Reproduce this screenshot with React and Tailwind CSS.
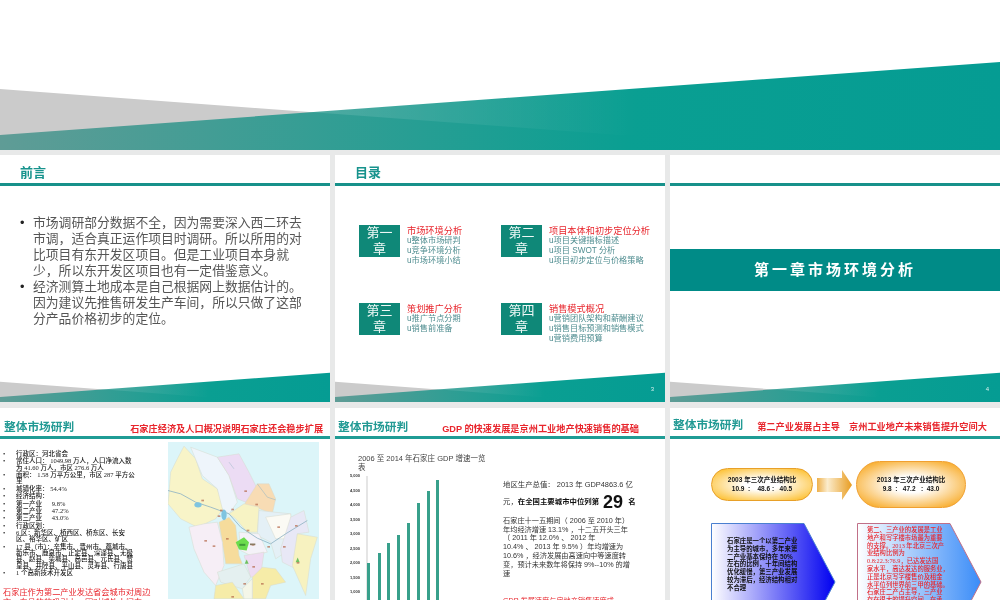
const bars = [
  { x: 367, top: 562 },
  { x: 378, top: 552 },
  { x: 387, top: 542 },
  { x: 397, top: 534 },
  { x: 407, top: 522 },
  { x: 417, top: 502 },
  { x: 427, top: 490 },
  { x: 436, top: 479 },
];

const ticks = ["5,000", "4,500", "4,000", "3,500", "3,000", "2,500", "2,000", "1,500", "1,000"];

const regions = [
  ["#f8f4c8", "30,100 50,60 70,22 105,60 125,120 170,150 190,205 165,240 110,265 60,240 22,195 26,150"],
  ["#eef5fb", "90,25 130,40 170,55 205,110 230,190 205,225 185,210 170,150 125,110"],
  ["#ecdcf4", "170,55 235,45 265,100 290,150 255,190 230,180 205,110"],
  ["#f8dcb4", "290,135 325,135 345,180 335,225 285,205 250,200 255,190"],
  ["#f7f3c4", "205,225 250,195 295,205 290,280 260,280 225,240"],
  ["#f6dc9c", "175,250 205,235 225,260 235,350 245,375 195,375 185,310"],
  ["#f6eef6", "85,265 130,255 170,250 185,310 190,380 165,440 130,400 100,330"],
  ["#e4f0f6", "295,215 390,225 390,330 345,360 330,310 290,290"],
  ["#fbfaf4", "315,235 390,225 395,300 345,300"],
  ["#e8e8f6", "390,235 430,215 445,280 410,285 405,390 365,370 360,330"],
  ["#f7f2c0", "410,285 470,295 450,360 435,470 395,380"],
  ["#f4f2f8", "235,280 295,285 320,340 270,350 240,335"],
  ["#eedcf2", "250,350 310,340 300,410 270,415"],
  ["#e4f0f0", "170,400 250,375 270,415 245,450 180,430"],
  ["#f6eca8", "275,415 305,385 345,390 375,430 330,440 315,480 275,480"],
  ["#f6eca8", "165,440 215,430 250,480 160,480"],
  ["#f4f6e8", "245,450 275,420 275,480 250,480"],
];

const pins = [
  [255, 157], [288, 197], [216, 212], [175, 232], [126, 185], [182, 215], [262, 275],
  [200, 300], [135, 306], [160, 322], [277, 318], [324, 324], [371, 324], [354, 265],
  [407, 261], [412, 372], [279, 384], [252, 435], [305, 435], [216, 474],
];

function Wedge() {
  return (
    <svg viewBox="0 0 1000 150" preserveAspectRatio="none" className="block h-full w-full">
      <defs>
        <linearGradient id="tealFade" x1="0" x2="1" y1="0" y2="0">
          <stop offset="0" stopColor="#5f9c96" />
          <stop offset="0.63" stopColor="#0a9f92" />
          <stop offset="1" stopColor="#059c93" />
        </linearGradient>
        <linearGradient id="tealGlow" gradientUnits="userSpaceOnUse" x1="310" x2="640" y1="0" y2="0">
          <stop offset="0" stopColor="#ffffff" stopOpacity="0.13" />
          <stop offset="1" stopColor="#ffffff" stopOpacity="0" />
        </linearGradient>
      </defs>
      <polygon points="0,89 620,135 620,150 0,150" fill="#cbcbcb" />
      <polygon points="0,135 1000,62 1000,150 0,150" fill="url(#tealFade)" />
      <polygon points="310,112 640,88 640,135 620,135" fill="url(#tealGlow)" />
    </svg>
  );
}

function Slide({ title, page, plain, children }) {
  return (
    <div className="relative flex h-full flex-col overflow-hidden bg-white">
      <div className="flex h-[28px] items-end pb-[2px] pl-[20px] text-[13px] font-bold leading-[16px] text-[#17938d]">
        {title}
      </div>
      <div className="h-[3px] bg-[#17918a]" />
      <div className="min-h-0 flex-1">{children}</div>
      {!plain && (
        <div className="h-[50px] shrink-0">
          <Wedge />
        </div>
      )}
      {page && <span className="absolute bottom-[9px] right-[11px] text-[6px] leading-[8px] text-[#d8f0ee]">{page}</span>}
    </div>
  );
}

function TocItem({ chapter, heading, lines }) {
  return (
    <div className="flex items-start gap-[7px]">
      <div className="flex h-[32px] w-[41px] shrink-0 items-center justify-center bg-[#0f8878] text-center text-[13px] leading-[16px] text-[#eef8f6]">
        <span>
          第{chapter}
          <br />章
        </span>
      </div>
      <div className="pt-[1px] text-[8.2px] leading-[10px] text-[#4f8d90]">
        <p className="text-[9.2px] text-[#e8262d]">{heading}</p>
        {lines.map((line) => (
          <p key={line}>u{line}</p>
        ))}
      </div>
    </div>
  );
}

function MarketSlide({ heading, headingClass, titleClass, children, indent }) {
  return (
    <div className="flex h-full flex-col overflow-hidden bg-white">
      <div className={"flex h-[28px] shrink-0 items-end whitespace-nowrap pr-[8px] " + indent}>
        <span className={"text-[11.7px] font-bold leading-[16px] text-[#229a94] " + titleClass}>整体市场研判</span>
        <span className={"text-[9.2px] font-bold leading-[12px] text-[#e8262d] " + headingClass}>{heading}</span>
      </div>
      <div className="h-[3px] shrink-0 bg-[#1f9c95]" />
      <div className="relative min-h-0 flex-1">{children}</div>
    </div>
  );
}

function CityFacts() {
  const facts = [
    ["行政区：河北省会"],
    ["常住人口： 1049.98 万人，人口净流入数", "为 41.60 万人，市区 276.6 万人"],
    ["面积： 1.58 万平方公里，市区 287 平方公", "里"],
    ["城镇化率： 54.4%"],
    ["经济结构："],
    ["第一产业      9.8%"],
    ["第二产业      47.2%"],
    ["第三产业      43.0%"],
    ["行政区划："],
    ["6 区：新华区、桥西区、桥东区、长安", "区、裕华区、矿区"],
    ["17 县（市）：辛集市、晋州市、藁城市、", "新乐市、鹿泉市、正定县、深泽县、无极", "县、赵县、栾城县、高邑县、元氏县、赞", "皇县、井陉县、平山县、灵寿县、行唐县"],
    ["1 个高新技术开发区"],
  ];
  return (
    <ul className="flex w-[140px] flex-col gap-[1.1px] pl-[3px] font-['Liberation_Serif','Noto_Sans_CJK_SC',serif] text-[6.5px] font-medium leading-[6.3px] text-[#222]">
      {facts.map((lines) => (
        <li key={lines[0]} className="flex">
          <span className="w-[13px] shrink-0">•</span>
          <span className="whitespace-pre">
            {lines.map((line) => (
              <span key={line} className="block">{line}</span>
            ))}
          </span>
        </li>
      ))}
    </ul>
  );
}

function CityMap() {
  return (
    <svg viewBox="22 10 453 470" className="block h-[157px] w-[151px] bg-[#dcf5f9]">
      {regions.map(([fill, points]) => (
        <polygon key={points} points={points} fill={fill} stroke="#d6dbcf" strokeWidth="1.5" />
      ))}
      <path d="M22 155 L60 165 L105 190 L150 205 L205 225 L240 265 L290 298 L330 315 L375 285 L440 245" fill="none" stroke="#8fb3c4" strokeWidth="2.5" />
      <path d="M290 135 L320 175 L345 183" fill="none" stroke="#8fb3c4" strokeWidth="1.5" />
      <path d="M205 70 L220 90" fill="none" stroke="#9fb8c8" strokeWidth="1.5" />
      <ellipse cx="112" cy="198" rx="11" ry="8" fill="#7fc4e0" />
      <ellipse cx="190" cy="228" rx="8" ry="16" fill="#7fc4e0" />
      <polygon points="225,310 250,295 265,310 258,335 235,332" fill="#6bdc4c" />
      <polygon points="258,362 264,375 252,375" fill="#6fc060" />
      <polygon points="411,356 417,370 405,370" fill="#6fc060" />
      {pins.map(([x, y]) => (
        <rect key={x + "-" + y} x={x - 4} y={y - 2.5} width="8" height="5" fill="#b5684c" opacity="0.7" />
      ))}
      <rect x="236" y="315" width="18" height="6" fill="#3f9a38" />
      <rect x="268" y="314" width="16" height="5" fill="#8a7a60" />
    </svg>
  );
}

function GdpChart() {
  return (
    <svg viewBox="335 470 120 130" className="block h-[130px] w-[120px]">
      {ticks.map((label, i) => (
        <text key={label} x="355" y={476 + i * 14.5} fontSize="4" fontWeight="700" fill="#333" textAnchor="middle">{label}</text>
      ))}
      <line x1="367" x2="367" y1="475" y2="600" stroke="#aaa" strokeWidth="0.6" />
      {bars.map((bar) => (
        <rect key={bar.x} x={bar.x} y={bar.top} width="3" height={600 - bar.top} fill="#38a08b" />
      ))}
    </svg>
  );
}

function Pill({ className, children }) {
  return (
    <div
      className={
        "flex shrink-0 flex-col items-center justify-center rounded-full border text-center text-[6.5px] font-bold leading-[8.5px] text-[#111] " +
        className
      }
    >
      {children}
    </div>
  );
}

function Pentagon({ fill, stroke, children }) {
  return (
    <div className="relative h-[118px] w-[125px] shrink-0">
      <svg viewBox="0 0 125 118" className="absolute inset-0 block h-full w-full">
        <defs>
          <linearGradient id={fill} x1="0" x2="1" y1="0" y2="0">
            <stop offset="0" stopColor="#ffffff" />
            <stop offset="1" stopColor={fill} />
          </linearGradient>
        </defs>
        <polygon points="0.5,0.5 93,0.5 124,59 93,117.5 0.5,117.5" fill={"url(#" + fill + ")"} stroke={stroke} />
      </svg>
      {children}
    </div>
  );
}

export default function App() {
  return (
    <div className="flex h-[600px] w-[1000px] flex-col overflow-hidden bg-[#e8e9e9] blur-[0.5px] [font-family:'Liberation_Sans','Noto_Sans_CJK_SC',sans-serif]">
      <div className="h-[150px] shrink-0 bg-white">
        <Wedge />
      </div>

      <div className="mt-[5px] grid h-[247px] shrink-0 grid-cols-3 gap-x-[5px]">
        <Slide title="前言">
          <ul className="flex flex-col gap-[0.2px] pl-[20px] pt-[29px] text-[12.8px] leading-[16px] text-[#555]">
            <li className="flex">
              <span className="w-[13px] shrink-0 text-[#222]">•</span>
              <span className="whitespace-nowrap">
                市场调研部分数据不全，因为需要深入西二环去
                <br />市调，适合真正运作项目时调研。所以所用的对
                <br />比项目有东开发区项目。但是工业项目本身就
                <br />少，所以东开发区项目也有一定借鉴意义。
              </span>
            </li>
            <li className="flex">
              <span className="w-[13px] shrink-0 text-[#222]">•</span>
              <span className="whitespace-nowrap">
                经济测算土地成本是自己根据网上数据估计的。
                <br />因为建议先推售研发生产车间，所以只做了这部
                <br />分产品价格初步的定位。
              </span>
            </li>
          </ul>
        </Slide>

        <Slide title="目录" page="3">
          <div className="grid grid-cols-[142px_1fr] grid-rows-[78px_auto] pl-[24px] pt-[39px]">
            <TocItem chapter="一" heading="市场环境分析" lines={["整体市场研判", "竞争环境分析", "市场环境小结"]} />
            <TocItem chapter="二" heading="项目本体和初步定位分析" lines={["项目关键指标描述", "项目 SWOT 分析", "项目初步定位与价格策略"]} />
            <TocItem chapter="三" heading="策划推广分析" lines={["推广节点分期", "销售前准备"]} />
            <TocItem chapter="四" heading="销售模式概况" lines={["营销团队架构和薪酬建议", "销售目标预测和销售模式", "营销费用预算"]} />
          </div>
        </Slide>

        <Slide page="4">
          <div className="mt-[63px] flex h-[42px] items-center justify-center bg-[#008b87] text-[15px] font-bold tracking-[3px] text-white">
            第一章市场环境分析
          </div>
        </Slide>
      </div>

      <div className="mt-[6px] grid h-[192px] shrink-0 grid-cols-3 gap-x-[5px]">
        <MarketSlide indent="pl-[4px]" titleClass="mb-[1px]" headingClass="ml-[56px] mb-[1px]" heading="石家庄经济及人口概况说明石家庄还会稳步扩展">
          <div className="flex h-full items-start pt-[12px]">
            <div className="w-[168px] shrink-0">
              <CityFacts />
              <p className="mt-[12px] whitespace-nowrap pl-[3px] font-['Liberation_Serif','Noto_Sans_CJK_SC',serif] text-[8.2px] leading-[10px] text-[#e8262d]">
                石家庄作为第二产业发达省会城市对周边
                <br />市、向县的的吸引力，因对城外人门向
              </p>
            </div>
            <div className="-mt-[9px]">
              <CityMap />
            </div>
          </div>
        </MarketSlide>

        <MarketSlide indent="pl-[3px]" titleClass="mb-[1px]" headingClass="ml-[34px] mb-[1px] font-semibold" heading="GDP 的快速发展是京州工业地产快速销售的基础">
          <div className="flex h-full items-start">
            <div className="w-[168px] shrink-0">
              <p className="ml-[23px] mt-[15px] w-[130px] text-[7.5px] leading-[9px] text-[#444]">
                2006 至 2014 年石家庄 GDP 增速一览
                <br />表
              </p>
              <div className="-mt-[1px]">
                <GdpChart />
              </div>
            </div>
            <div className="w-[135px] pt-[42px] text-[7.2px] leading-[8.8px] text-[#333]">
              <p className="whitespace-nowrap text-[7.4px]">地区生产总值： 2013 年 GDP4863.6 亿</p>
              <p className="mt-[4px] flex h-[18px] items-center whitespace-nowrap text-[7.4px]">
                元，<span className="font-bold text-[#111]">在全国主要城市中位列第</span>
                <span className="mx-[4px] text-[18px] font-bold text-[#111]">29</span>
                <span className="ml-[1px] font-bold text-[#111]">名</span>
              </p>
              <p className="mt-[5px] whitespace-nowrap">
                石家庄十一五期间（ 2006 至 2010 年）
                <br />年均经济增速 13.1% ，十二五开头三年
                <br />（ 2011 年 12.0% 、 2012 年
                <br />10.4% 、 2013 年 9.5% ）年均增速为
                <br />10.6% ，经济发展由高速向中等速度转
                <br />变，预计未来数年将保持 9%--10% 的增
                <br />速
              </p>
              <p className="mt-[19px] whitespace-nowrap text-[#e8262d]">GDP 发展速度与房地产销售速度成</p>
            </div>
          </div>
        </MarketSlide>

        <MarketSlide indent="pl-[3px]" titleClass="mb-[3px]" headingClass="ml-[14px] mb-[3px] font-semibold" heading="第二产业发展占主导　京州工业地产未来销售提升空间大">
          <div className="flex flex-col pl-[41px] pt-[22px]">
            <div className="flex h-[47px] items-center">
              <Pill className="h-[33px] w-[102px] border-[#e8a028] bg-[radial-gradient(ellipse_at_center,#ffffff_25%,#fdc030_90%)]">
                <span>2003 年三次产业结构比</span>
                <span className="whitespace-pre">10.9  :    48.6 :   40.5</span>
              </Pill>
              <svg viewBox="0 0 35 30" className="mx-[4px] block h-[30px] w-[35px] shrink-0">
                <defs>
                  <linearGradient id="arrowFill" x1="0" x2="1" y1="0" y2="0">
                    <stop offset="0" stopColor="#eeb04a" />
                    <stop offset="0.3" stopColor="#fbeccd" />
                    <stop offset="1" stopColor="#e89c20" />
                  </linearGradient>
                </defs>
                <polygon points="0,8 25,8 25,0 35,15 25,30 25,22 0,22" fill="url(#arrowFill)" />
              </svg>
              <Pill className="h-[47px] w-[110px] border-[#f0a030] bg-[radial-gradient(ellipse_at_center,#ffffff_25%,#f8a820_90%)]">
                <span>2013 年三次产业结构比</span>
                <span className="whitespace-pre">9.8  :   47.2   :  43.0</span>
              </Pill>
            </div>
            <div className="mt-[15px] flex gap-[21px]">
              <Pentagon fill="#0000f0" stroke="#4a7fd0">
                <p className="absolute left-[16px] top-[14px] whitespace-nowrap text-[6.4px] font-bold leading-[7.8px] text-[#111]">
                  石家庄是一个以第二产业
                  <br />为主导的城市，多年来第
                  <br />二产业基本保持在 50%
                  <br />左右的比例，十年间结构
                  <br />优化缓慢，第三产业发展
                  <br />较为滞后，经济结构相对
                  <br />不合理
                </p>
              </Pentagon>
              <Pentagon fill="#3a8cf8" stroke="#c07088">
                <p className="absolute left-[10px] top-[3px] whitespace-nowrap font-['Liberation_Serif','Noto_Sans_CJK_SC',serif] text-[6.3px] font-medium leading-[7.8px] text-[#e8262d]">
                  第二、三产业的发展是工业
                  <br />地产和写字楼市场最为重要
                  <br />的支撑。2013 年北京三次产
                  <br />业结构比例为
                  <br />0.8:22.3:76.9，已达发达国
                  <br />家水平，高达发达的服务业，
                  <br />正是北京写字楼售价及租金
                  <br />水平位列世界前三甲的基础。
                  <br />石家庄二产占主导，三产业
                  <br />存在很大的提升空间，在承
                </p>
              </Pentagon>
            </div>
          </div>
        </MarketSlide>
      </div>
    </div>
  );
}
